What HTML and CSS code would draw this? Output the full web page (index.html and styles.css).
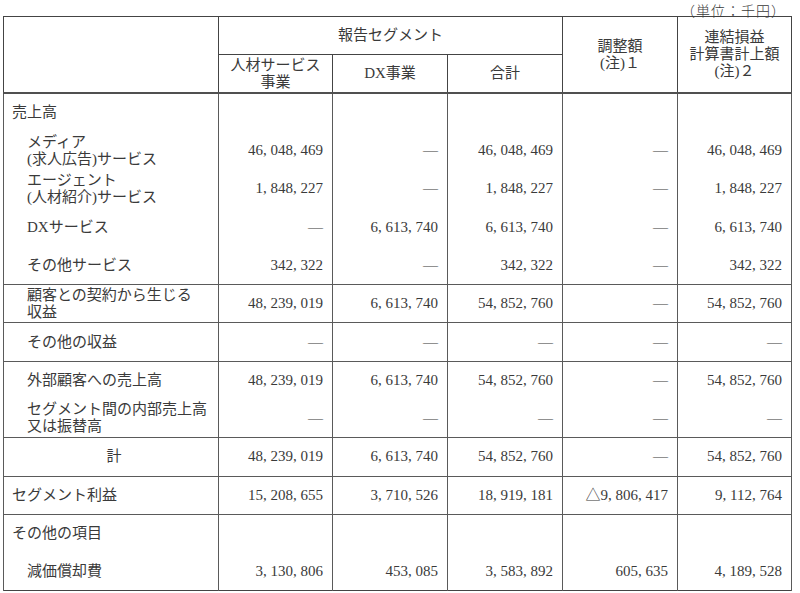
FILE: index.html
```html
<!DOCTYPE html>
<html lang="ja">
<head>
<meta charset="utf-8">
<title>セグメント情報</title>
<link rel="stylesheet" href="styles.css">
</head>
<body>
<div class="page">
  <div class="unit">（単位：千円）</div>
  <table class="seg">
    <colgroup>
      <col class="c-label"><col class="c-a"><col class="c-b"><col class="c-b"><col class="c-b"><col class="c-a">
    </colgroup>
    <thead>
      <tr>
        <th rowspan="2" class="blank"></th>
        <th colspan="3">報告セグメント</th>
        <th rowspan="2">調整額<br>(注)１</th>
        <th rowspan="2">連結損益<br>計算書計上額<br>(注)２</th>
      </tr>
      <tr>
        <th>人材サービス<br>事業</th>
        <th>DX事業</th>
        <th>合計</th>
      </tr>
    </thead>
    <tbody>
      <tr>
        <td class="l1">売上高</td><td></td><td></td><td></td><td></td><td></td>
      </tr>
      <tr>
        <td class="l2">メディア<br>(求人広告)サービス</td>
        <td class="n">46, 048, 469</td><td class="n">―</td><td class="n">46, 048, 469</td><td class="n">―</td><td class="n">46, 048, 469</td>
      </tr>
      <tr>
        <td class="l2">エージェント<br>(人材紹介)サービス</td>
        <td class="n">1, 848, 227</td><td class="n">―</td><td class="n">1, 848, 227</td><td class="n">―</td><td class="n">1, 848, 227</td>
      </tr>
      <tr>
        <td class="l2">DXサービス</td>
        <td class="n">―</td><td class="n">6, 613, 740</td><td class="n">6, 613, 740</td><td class="n">―</td><td class="n">6, 613, 740</td>
      </tr>
      <tr>
        <td class="l2">その他サービス</td>
        <td class="n">342, 322</td><td class="n">―</td><td class="n">342, 322</td><td class="n">―</td><td class="n">342, 322</td>
      </tr>
      <tr class="sep">
        <td class="l2">顧客との契約から生じる<br>収益</td>
        <td class="n">48, 239, 019</td><td class="n">6, 613, 740</td><td class="n">54, 852, 760</td><td class="n">―</td><td class="n">54, 852, 760</td>
      </tr>
      <tr class="sep">
        <td class="l2">その他の収益</td>
        <td class="n">―</td><td class="n">―</td><td class="n">―</td><td class="n">―</td><td class="n">―</td>
      </tr>
      <tr class="sep">
        <td class="l2">外部顧客への売上高</td>
        <td class="n">48, 239, 019</td><td class="n">6, 613, 740</td><td class="n">54, 852, 760</td><td class="n">―</td><td class="n">54, 852, 760</td>
      </tr>
      <tr>
        <td class="l2">セグメント間の内部売上高<br>又は振替高</td>
        <td class="n">―</td><td class="n">―</td><td class="n">―</td><td class="n">―</td><td class="n">―</td>
      </tr>
      <tr class="sep">
        <td class="c">計</td>
        <td class="n">48, 239, 019</td><td class="n">6, 613, 740</td><td class="n">54, 852, 760</td><td class="n">―</td><td class="n">54, 852, 760</td>
      </tr>
      <tr class="sep">
        <td class="l1">セグメント利益</td>
        <td class="n">15, 208, 655</td><td class="n">3, 710, 526</td><td class="n">18, 919, 181</td><td class="n">△9, 806, 417</td><td class="n">9, 112, 764</td>
      </tr>
      <tr class="sep">
        <td class="l1">その他の項目</td><td></td><td></td><td></td><td></td><td></td>
      </tr>
      <tr>
        <td class="l2">減価償却費</td>
        <td class="n">3, 130, 806</td><td class="n">453, 085</td><td class="n">3, 583, 892</td><td class="n">605, 635</td><td class="n">4, 189, 528</td>
      </tr>
    </tbody>
  </table>
</div>
</body>
</html>
```

FILE: styles.css
```css
* {
  box-sizing: border-box;
}

html,
body {
  margin: 0;
  padding: 0;
  background: #ffffff;
}

body {
  font-family: "Liberation Serif", "Noto Sans CJK JP", serif;
  font-size: 15px;
  color: #3a3a3a;
}

.page {
  width: 800px;
  padding-left: 3px;
}

.unit {
  width: 788px;
  height: 16px;
  line-height: 20px;
  padding-right: 5px;
  text-align: right;
  font-family: "Noto Sans CJK JP", sans-serif;
  font-weight: 300;
  font-size: 14px;
  letter-spacing: 1px;
}

.seg {
  border-collapse: collapse;
  table-layout: fixed;
  width: 788px;
  border: 1px solid #444444;
}

.c-label {
  width: 215px;
}

.c-a {
  width: 114px;
}

.c-b {
  width: 115px;
}

.seg tr {
  height: 38.3px;
}

.seg th,
.seg td {
  padding: 0;
  vertical-align: middle;
  line-height: 17px;
  white-space: nowrap;
  font-weight: normal;
  border-left: 1px solid #5a5a5a;
  border-right: 1px solid #5a5a5a;
}

.seg th {
  text-align: center;
  border: 1px solid #444444;
}

.seg thead tr:last-child th,
.seg thead th[rowspan] {
  border-bottom: 2px solid #505050;
}

.seg tr.sep td {
  border-top: 1px solid #5a5a5a;
}

.l1 {
  padding-left: 8px !important;
  text-align: left;
}

.l2 {
  padding-left: 23px !important;
  text-align: left;
}

.c {
  text-align: center;
  padding-left: 6px !important;
}

.n {
  text-align: right;
  padding-right: 9px !important;
}
```
